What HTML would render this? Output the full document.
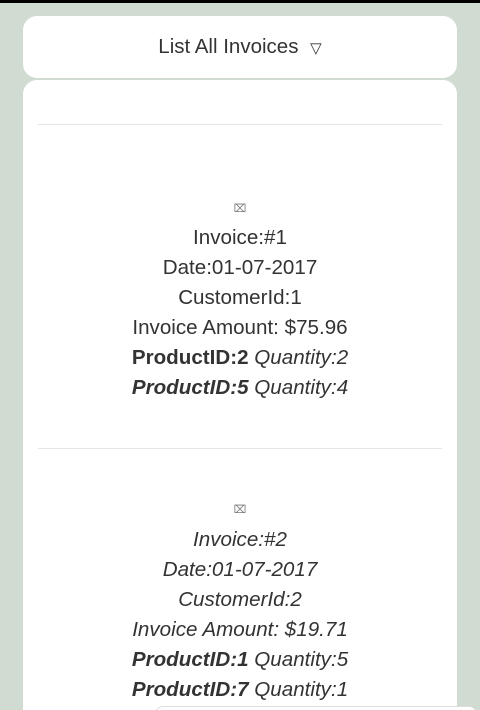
<!DOCTYPE html>
<html><head><style>
html,body{margin:0;padding:0;width:480px;height:710px;overflow:hidden;}
body{background:#d0dbd2;position:relative;font-family:"Liberation Sans",sans-serif;color:#333;}
.bar{position:absolute;left:0;top:0;width:480px;height:3px;background:#000;}
.hdr{position:absolute;left:23px;top:16px;width:434px;height:62px;background:#fff;border-radius:14px;text-align:center;line-height:62px;font-size:20.5px;color:#333;}
.hdr .tri{font-size:15px;margin-left:6px;}
.card{position:absolute;left:23px;top:80px;width:434px;height:630px;background:#fff;border-radius:14px 14px 0 0;}
.hr{position:absolute;left:38px;width:404px;height:1px;background:#e6e6e6;}
.l{position:absolute;left:0;width:480px;text-align:center;font-size:20.6px;line-height:30px;white-space:nowrap;}
.g{font-size:11px;color:#777;}
i{font-style:italic;}
.box{position:absolute;left:155px;top:706px;width:320px;height:20px;border:1px solid #ddd;border-radius:8px;background:#fff;}
</style></head><body>
<div class="bar"></div>
<div class="hdr">List All Invoices <span class="tri">▽</span></div>
<div class="card"></div>
<div class="hr" style="top:124px"></div>
<div class="l g" style="top:194px">⌧</div>
<div class="l" style="top:223px">Invoice:#1</div>
<div class="l" style="top:253px">Date:01-07-2017</div>
<div class="l" style="top:283px">CustomerId:1</div>
<div class="l" style="top:313px">Invoice Amount: $75.96</div>
<div class="l" style="top:343px"><b>ProductID:2</b> <i>Quantity:2</i></div>
<div class="l" style="top:373px"><b><i>ProductID:5</i></b> <i>Quantity:4</i></div>
<div class="hr" style="top:448px"></div>
<div class="l g" style="top:495px">⌧</div>
<div class="l" style="top:525px"><i>Invoice:#2</i></div>
<div class="l" style="top:555px"><i>Date:01-07-2017</i></div>
<div class="l" style="top:585px"><i>CustomerId:2</i></div>
<div class="l" style="top:615px"><i>Invoice Amount: $19.71</i></div>
<div class="l" style="top:645px"><b><i>ProductID:1</i></b> <i>Quantity:5</i></div>
<div class="l" style="top:675px"><b><i>ProductID:7</i></b> <i>Quantity:1</i></div>
<div class="box"></div>
</body></html>
